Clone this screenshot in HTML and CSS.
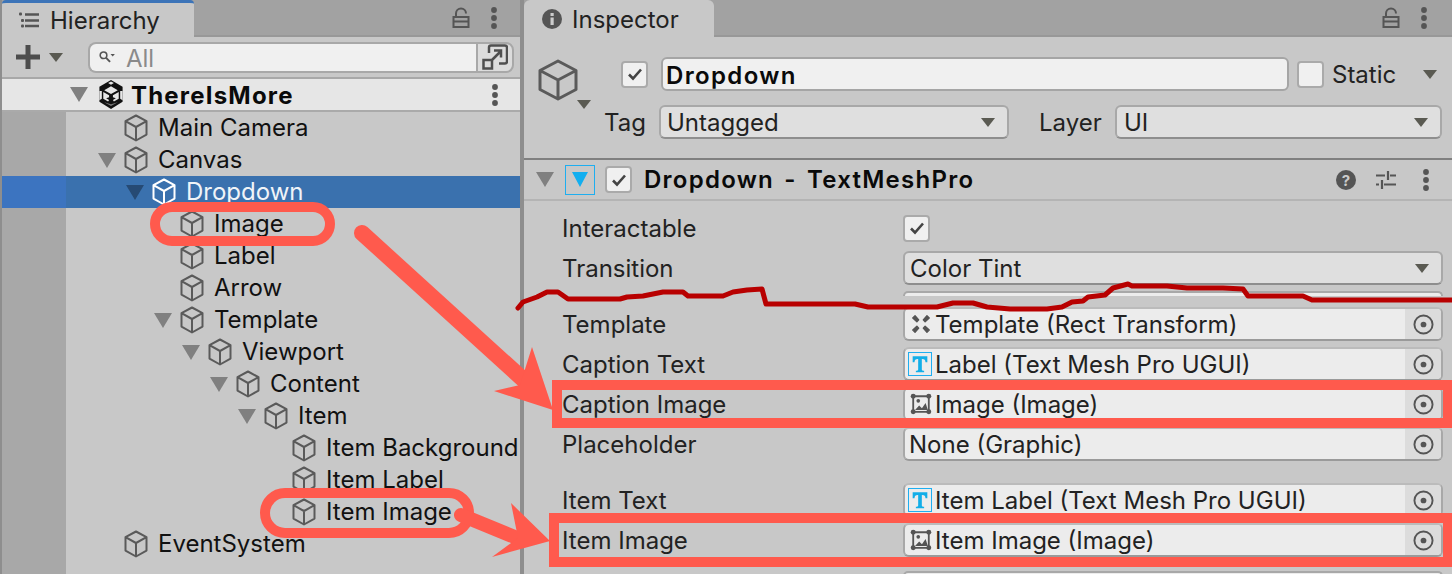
FILE: index.html
```html
<!DOCTYPE html>
<html lang="en">
<head>
<meta charset="utf-8">
<title>Unity Editor</title>
<link rel="stylesheet" href="styles.css">
</head>
<body>
<svg class="defs" aria-hidden="true">
  <symbol id="cube" viewBox="0 0 24 28">
    <path d="M12 1.500 22.500 7.200V20.600L12 26.500 1.500 20.600V7.200ZM1.500 7.200 12 13l10.500-5.800M12 13v13.500" fill="none" stroke="currentColor" stroke-width="2" stroke-linejoin="round"/>
  </symbol>
  <symbol id="kebab" viewBox="0 0 8 24">
    <circle cx="4" cy="4" r="2.900" fill="currentColor"/><circle cx="4" cy="12" r="2.900" fill="currentColor"/><circle cx="4" cy="20" r="2.900" fill="currentColor"/>
  </symbol>
  <symbol id="lock" viewBox="0 0 18 22">
    <path d="M4 10V6.500a5 5 0 0 1 10 0M1.500 10h15v10h-15ZM1.500 14.500h15" fill="none" stroke="currentColor" stroke-width="2"/>
  </symbol>
  <symbol id="target" viewBox="0 0 22 22">
    <circle cx="11" cy="11" r="9.500" fill="none" stroke="currentColor" stroke-width="2"/><circle cx="11" cy="11" r="3" fill="currentColor"/>
  </symbol>
  <symbol id="check" viewBox="0 0 16 14">
    <path d="M2 7.500 6 11.500 14 2.500" fill="none" stroke="currentColor" stroke-width="2.600"/>
  </symbol>
  <symbol id="img" viewBox="0 0 24 24">
    <path d="M3.500 3.500h17v17h-17Z" fill="none" stroke="currentColor" stroke-width="2"/>
    <path d="M5.500 18.500 10 13.500l3 3 4-5.500 2.500 7.500Z" fill="currentColor"/><circle cx="9" cy="8.500" r="2" fill="currentColor"/>
    <circle cx="3.500" cy="3.500" r="2.700" fill="currentColor"/><circle cx="20.500" cy="3.500" r="2.700" fill="currentColor"/><circle cx="3.500" cy="20.500" r="2.700" fill="currentColor"/><circle cx="20.500" cy="20.500" r="2.700" fill="currentColor"/>
  </symbol>
  <symbol id="tmp" viewBox="0 0 24 24">
    <path d="M4 3.500h16v6.500h-2c-.2-2.500-1-3.500-3.500-3.500H14V18c0 1 .8 1.300 2.500 1.300V21h-9v-1.700c1.700 0 2.500-.3 2.500-1.300V6.500h-.5C7 6.500 6.200 7.500 6 10H4Z" fill="#12aee8"/>
  </symbol>
</svg>

<div class="editor">
  <section class="panel hierarchy">
    <header class="tabbar">
      <div class="tab tab-active">
        <svg class="tab-icon" viewBox="0 0 22 18"><path d="M7 3.500h14M7 9.500h14M7 15h14" stroke="#555" stroke-width="2.400" fill="none"/><rect x="1" y="1.500" width="3" height="3" rx="1" fill="#555"/><rect x="3" y="8" width="3" height="3" rx="1" fill="#555"/><rect x="3" y="13.500" width="3" height="3" rx="1" fill="#555"/></svg>
        <span>Hierarchy</span>
      </div>
      <div class="tab-actions">
        <svg class="lock"><use href="#lock"/></svg>
        <svg class="kebab"><use href="#kebab"/></svg>
      </div>
    </header>
    <div class="toolbar">
      <svg class="plus" viewBox="0 0 24 24"><path d="M12 0v24M0 12h24" stroke="#4d4d4d" stroke-width="5"/></svg>
      <span class="tri tri-tool"></span>
      <div class="search">
        <svg class="search-icon" viewBox="0 0 20 16"><circle cx="6" cy="6" r="3.800" fill="none" stroke="#555" stroke-width="1.800"/><path d="m9 9 4.500 4.500" stroke="#555" stroke-width="2.200"/><path d="m14 4.500h5l-2.500 3Z" fill="#555"/></svg>
        <span class="search-text">All</span>
      </div>
      <button class="search-btn" type="button">
        <svg viewBox="0 0 26 26"><path d="M7 9V3.500A2 2 0 0 1 9 1.500h14a2 2 0 0 1 2 2v14a2 2 0 0 1-2 2h-6" fill="none" stroke="#4f4f4f" stroke-width="2.500"/><path d="M1.500 16h8.500v8.500H1.500ZM10 16l8.500-8.500M12 6.500h7V13.500" fill="none" stroke="#4f4f4f" stroke-width="2.500"/></svg>
      </button>
    </div>
    <div class="scene-row">
      <span class="tri-tree tri-scene"></span>
      <svg class="unity" viewBox="0 0 26 30"><path d="M13 0 25 7v15.500l-12 7.500L1 22.500V7Z" fill="#111"/><path d="M13 6.500 20 10.500 13 14.500 6 10.500Z" fill="#e6e6e6"/><path d="M1 11.500h2.500v8L1 21ZM25 11.500h-2.500v8L25 21ZM10 3 13 1.500 16 3 13 5Z" fill="#e6e6e6"/><path d="M5 12.500v7l5 2.800 1-1.500-3-2 3-1v-2ZM21 12.500v7l-5 2.800-1-1.500 3-2-3-1v-2Z" fill="#e6e6e6"/><path d="M6 23l7 4 7-4-7 2Z" fill="#777"/></svg>
      <strong>ThereIsMore</strong>
      <svg class="kebab kebab-scene"><use href="#kebab"/></svg>
    </div>
    <ul class="tree">
      <li class="row"><span class="gutter"></span><div class="node d0"><span class="tri-slot"></span><svg class="cube"><use href="#cube"/></svg><span class="name">Main Camera</span></div></li>
      <li class="row"><span class="gutter"></span><div class="node d0"><span class="tri-slot"><i class="tri-tree"></i></span><svg class="cube"><use href="#cube"/></svg><span class="name">Canvas</span></div></li>
      <li class="row selected"><span class="gutter"></span><div class="node d1"><span class="tri-slot"><i class="tri-tree"></i></span><svg class="cube"><use href="#cube"/></svg><span class="name">Dropdown</span></div></li>
      <li class="row"><span class="gutter"></span><div class="node d2"><span class="tri-slot"></span><svg class="cube"><use href="#cube"/></svg><span class="name">Image</span></div></li>
      <li class="row"><span class="gutter"></span><div class="node d2"><span class="tri-slot"></span><svg class="cube"><use href="#cube"/></svg><span class="name">Label</span></div></li>
      <li class="row"><span class="gutter"></span><div class="node d2"><span class="tri-slot"></span><svg class="cube"><use href="#cube"/></svg><span class="name">Arrow</span></div></li>
      <li class="row"><span class="gutter"></span><div class="node d2"><span class="tri-slot"><i class="tri-tree"></i></span><svg class="cube"><use href="#cube"/></svg><span class="name">Template</span></div></li>
      <li class="row"><span class="gutter"></span><div class="node d3"><span class="tri-slot"><i class="tri-tree"></i></span><svg class="cube"><use href="#cube"/></svg><span class="name">Viewport</span></div></li>
      <li class="row"><span class="gutter"></span><div class="node d4"><span class="tri-slot"><i class="tri-tree"></i></span><svg class="cube"><use href="#cube"/></svg><span class="name">Content</span></div></li>
      <li class="row"><span class="gutter"></span><div class="node d5"><span class="tri-slot"><i class="tri-tree"></i></span><svg class="cube"><use href="#cube"/></svg><span class="name">Item</span></div></li>
      <li class="row"><span class="gutter"></span><div class="node d6"><span class="tri-slot"></span><svg class="cube"><use href="#cube"/></svg><span class="name">Item Background</span></div></li>
      <li class="row"><span class="gutter"></span><div class="node d6"><span class="tri-slot"></span><svg class="cube"><use href="#cube"/></svg><span class="name">Item Label</span></div></li>
      <li class="row"><span class="gutter"></span><div class="node d6"><span class="tri-slot"></span><svg class="cube"><use href="#cube"/></svg><span class="name">Item Image</span></div></li>
      <li class="row"><span class="gutter"></span><div class="node d0"><span class="tri-slot"></span><svg class="cube"><use href="#cube"/></svg><span class="name">EventSystem</span></div></li>
      <li class="row row-fill"><span class="gutter"></span></li>
    </ul>
  </section>

  <section class="panel inspector">
    <header class="tabbar">
      <div class="tab tab-plain">
        <svg class="info" viewBox="0 0 20 20"><circle cx="10" cy="10" r="10" fill="#555"/><rect x="8.500" y="8.500" width="3.200" height="7.500" fill="#ccc"/><rect x="8.500" y="4" width="3.200" height="3" fill="#ccc"/></svg>
        <span>Inspector</span>
      </div>
      <div class="tab-actions">
        <svg class="lock"><use href="#lock"/></svg>
        <svg class="kebab"><use href="#kebab"/></svg>
      </div>
    </header>
    <div class="go-header">
      <div class="go-icon">
        <svg class="cube-lg" viewBox="0 0 40 42"><path d="M20 2 38 11.500V30.500L20 40 2 30.500V11.500ZM2 11.500 20 21l18-9.500M20 21v19" fill="none" stroke="currentColor" stroke-width="3" stroke-linejoin="round"/></svg>
        <span class="tri tri-go"></span>
      </div>
      <div class="go-rows">
        <div class="go-name">
          <span class="checkbox"><svg><use href="#check"/></svg></span>
          <div class="name-field">Dropdown</div>
          <span class="checkbox"></span>
          <span class="static-label">Static</span>
          <span class="tri tri-static"></span>
        </div>
        <div class="go-tags">
          <span class="tag-label">Tag</span>
          <div class="select select-tag"><span>Untagged</span><i class="tri"></i></div>
          <span class="layer-label">Layer</span>
          <div class="select select-layer"><span>UI</span><i class="tri"></i></div>
        </div>
      </div>
    </div>
    <div class="comp-header">
      <span class="tri-tree tri-comp"></span>
      <span class="comp-icon"><i></i></span>
      <span class="checkbox"><svg><use href="#check"/></svg></span>
      <strong>Dropdown - TextMeshPro</strong>
      <svg class="help" viewBox="0 0 20 20"><circle cx="10" cy="10" r="10" fill="#555"/><text x="10" y="15.500" text-anchor="middle" class="help-q">?</text></svg>
      <svg class="sliders" viewBox="0 0 20 20"><path d="M0 5.500h9M14 5.500h6M0 14.500h3M8 14.500h12M12 1v9M6 10v9" stroke="#555" stroke-width="2.200" fill="none"/></svg>
      <svg class="kebab"><use href="#kebab"/></svg>
    </div>
    <div class="props">
      <div class="prop"><label>Interactable</label><span class="checkbox"><svg><use href="#check"/></svg></span></div>
      <div class="prop"><label>Transition</label><div class="select select-prop"><span>Color Tint</span><i class="tri"></i></div></div>
      <div class="stub-row"><div class="stub"></div></div>
      <div class="prop"><label>Template</label><div class="field"><svg class="field-icon" viewBox="0 0 24 24"><path d="M3 5.500 5.500 3 9.500 7.500 7.500 9.500ZM21 5.500 18.500 3 14.500 7.500 16.500 9.500ZM3 18.500 5.500 21 9.500 16.500 7.500 14.500ZM21 18.500 18.500 21 14.500 16.500 16.500 14.500Z" fill="#555" stroke="#555" stroke-width="1.500" stroke-linejoin="round"/></svg><span class="field-text">Template (Rect Transform)</span><span class="pick"><svg><use href="#target"/></svg></span></div></div>
      <div class="prop"><label>Caption Text</label><div class="field"><span class="tmp-box"><svg><use href="#tmp"/></svg></span><span class="field-text">Label (Text Mesh Pro UGUI)</span><span class="pick"><svg><use href="#target"/></svg></span></div></div>
      <div class="prop"><label>Caption Image</label><div class="field"><svg class="field-icon"><use href="#img"/></svg><span class="field-text">Image (Image)</span><span class="pick"><svg><use href="#target"/></svg></span></div></div>
      <div class="prop"><label>Placeholder</label><div class="field"><span class="field-text text-none">None (Graphic)</span><span class="pick"><svg><use href="#target"/></svg></span></div></div>
      <div class="prop prop-gap"><label>Item Text</label><div class="field"><span class="tmp-box"><svg><use href="#tmp"/></svg></span><span class="field-text">Item Label (Text Mesh Pro UGUI)</span><span class="pick"><svg><use href="#target"/></svg></span></div></div>
      <div class="prop"><label>Item Image</label><div class="field"><svg class="field-icon"><use href="#img"/></svg><span class="field-text">Item Image (Image)</span><span class="pick"><svg><use href="#target"/></svg></span></div></div>
      <div class="stub-row stub-last"><div class="stub"></div></div>
    </div>
  </section>
</div>

<svg class="annotations" viewBox="0 0 1452 574" aria-hidden="true">
  <polyline class="redline" points="518,308 523,302 537,297 547,292 558,292 568,299 620,299 627,297 643,296 663,292 683,292 688,296 723,296 733,292 747,290 762,289 766,304 855,304 868,307 937,307 953,303 973,303 987,307 1010,309 1047,309 1062,307 1072,302 1083,301 1088,297 1105,295 1113,288 1128,284 1132,286 1167,286 1187,288 1223,288 1243,289 1248,296 1303,296 1312,300 1452,300"/>
  <rect class="mark" x="155" y="207" width="175" height="34" rx="17"/>
  <rect class="mark" x="265" y="493" width="204" height="40" rx="20"/>
  <path class="mark-frame" d="M552 380H1452V428H552ZM562 390V418H1443V390Z"/>
  <path class="mark-frame" d="M549 513H1452V567H549ZM559 523V557H1443V523Z"/>
  <line class="arrow-shaft" x1="362" y1="233" x2="526" y2="382"/>
  <polygon class="arrow-head" points="532,347 553,410 494,391 520,385"/>
  <line class="arrow-shaft-2" x1="461" y1="515" x2="522" y2="540"/>
  <polygon class="arrow-head" points="511,503 550,541 492,557 518,538"/>
</svg>
</body>
</html>
```

FILE: styles.css
```css
* { box-sizing: border-box; }
html, body { margin: 0; padding: 0; }
body {
  width: 1452px;
  height: 574px;
  overflow: hidden;
  position: relative;
  background: #8e8e8e;
  font-family: Inter, "Liberation Sans", sans-serif;
  font-size: 24px;
  color: #111;
}
.defs { position: absolute; width: 0; height: 0; }
.editor { display: flex; height: 574px; padding-left: 2px; gap: 4px; }
.panel { background: #c8c8c8; height: 574px; overflow: hidden; }
.hierarchy { width: 518px; flex: none; display: flex; flex-direction: column; }
.inspector { flex: 1; min-width: 0; }

/* tabs */
.tabbar { height: 37px; display: flex; background: #a2a2a2; border-bottom: 2px solid #989898; flex: none; }
.tab { height: 37px; width: 192px; flex: none; background: #c8c8c8; display: flex; align-items: center; border-radius: 4px 4px 0 0; color: #222; }
.tab-active { border-top: 3px solid #3c74b8; padding-left: 16px; gap: 10px; }
.tab-plain { width: 190px; padding: 2px 0 0 18px; gap: 10px; border-radius: 6px 6px 0 0; }
.tab-icon { width: 22px; height: 18px; }
.info { width: 20px; height: 20px; margin-top: -2px; }
.tab-actions { margin-left: auto; display: flex; align-items: center; gap: 20px; height: 35px; padding-right: 22px; }
.inspector .tab-actions { padding-right: 24px; }
.lock { width: 18px; height: 22px; color: #555; }
.kebab { width: 8px; height: 24px; color: #555; display: block; }

/* hierarchy toolbar */
.toolbar { height: 42px; display: flex; align-items: center; padding-left: 14px; border-bottom: 2px solid #a8a8a8; flex: none; }
.plus { width: 24px; height: 24px; flex: none; }
.tri { display: inline-block; width: 0; height: 0; border-left: 7px solid transparent; border-right: 7px solid transparent; border-top: 9px solid #5a5a52; flex: none; }
.tri-tool { margin-left: 9px; }
.search { margin-left: 25px; width: 388px; height: 31px; background: #f0f0f0; border: 2px solid #a8a8a8; border-right: 0; border-radius: 8px 0 0 8px; display: flex; align-items: center; padding-left: 8px; gap: 10px; color: #8a8a8a; flex: none; }
.search-icon { width: 18px; height: 14px; }
.search-text { padding-top: 2px; }
.search-btn { width: 38px; height: 31px; padding: 0; background: #dcdcdc; border: 2px solid #a8a8a8; border-radius: 0 8px 8px 0; display: flex; align-items: center; justify-content: center; flex: none; }
.search-btn svg { width: 26px; height: 26px; }

/* tree */
.scene-row { height: 33px; background: #e6e6e6; border-bottom: 2px solid #aaa; display: flex; align-items: center; padding-left: 68px; flex: none; }
.tri-tree { display: block; width: 0; height: 0; border-left: 9px solid transparent; border-right: 9px solid transparent; border-top: 15px solid #808080; }
.unity { width: 26px; height: 29px; margin-left: 10px; flex: none; }
.scene-row strong { font-weight: 700; margin-left: 7px; padding-top: 2px; color: #0a0a0a; letter-spacing: 1.2px; }
.kebab-scene { margin-left: auto; margin-right: 21px; }
.tree { list-style: none; margin: 0; padding: 0; flex: 1; display: flex; flex-direction: column; min-height: 0; }
.row { display: flex; height: 32px; flex: none; }
.row-fill { flex: 1; }
.gutter { width: 64px; flex: none; background: #a8a8a8; }
.node { display: flex; align-items: center; flex: 1; white-space: nowrap; min-width: 0; overflow: hidden; }
.name { padding-bottom: 2px; }
.d0 { padding-left: 29px; }
.d1 { padding-left: 57px; }
.d2 { padding-left: 85px; }
.d3 { padding-left: 113px; }
.d4 { padding-left: 141px; }
.d5 { padding-left: 169px; }
.d6 { padding-left: 197px; }
.tri-slot { width: 24px; flex: none; display: flex; justify-content: center; }
.cube { width: 24px; height: 28px; margin-left: 5px; margin-right: 10px; color: #5a5a5a; flex: none; }
.selected .gutter { background: #3c74c0; }
.selected .node { background: #3a71ae; color: #f0f4f8; }
.selected .cube { color: #fff; }
.selected .tri-tree { border-top-color: #264a74; }

/* inspector header */
.go-header { height: 123px; display: flex; border-bottom: 2px solid #808080; }
.go-icon { width: 76px; flex: none; position: relative; padding: 22px 0 0 14px; }
.cube-lg { width: 40px; height: 42px; color: #5a5a5a; display: block; }
.tri-go { position: absolute; left: 53px; top: 63px; }
.go-rows { flex: 1; min-width: 0; padding-top: 20px; }
.go-name { display: flex; align-items: center; height: 34px; padding-left: 21px; }
.checkbox { width: 27px; height: 27px; flex: none; background: #f0f0f0; border: 2px solid #aaa; border-radius: 4px; display: flex; align-items: center; justify-content: center; color: #444; }
.checkbox svg { width: 16px; height: 14px; }
.name-field { width: 628px; height: 34px; margin-left: 13px; background: #f0f0f0; border: 2px solid #a5a5a5; border-radius: 6px; padding-left: 3px; font-weight: 600; line-height: 33px; letter-spacing: 1.35px; color: #0a0a0a; flex: none; }
.name-field + .checkbox { margin-left: 8px; }
.static-label { margin-left: 8px; color: #222; }
.tri-static { margin-left: 27px; }
.go-tags { display: flex; align-items: center; height: 34px; margin-top: 14px; padding-left: 4px; }
.tag-label { width: 55px; flex: none; color: #222; }
.layer-label { width: 76px; margin-left: 30px; flex: none; color: #222; }
.select { height: 34px; background: #dfdfdf; border: 2px solid #a8a8a8; border-bottom-color: #8e8e8e; border-radius: 6px; display: flex; align-items: center; justify-content: space-between; padding: 0 12px 0 5px; color: #222; flex: none; }
.select-tag { width: 350px; padding-left: 6px; }
.select-layer { width: 327px; padding-left: 7px; }
.select-prop { width: 540px; }

/* component header */
.comp-header { height: 41px; display: flex; align-items: center; padding-left: 12px; border-bottom: 2px solid #b4b4b4; }
.tri-comp { margin-right: 11px; }
.comp-icon { width: 30px; height: 30px; border: 1px solid #1eaef0; display: flex; align-items: center; justify-content: center; flex: none; margin-right: 10px; }
.comp-icon i { display: block; width: 0; height: 0; border-left: 8px solid transparent; border-right: 8px solid transparent; border-top: 15px solid #12aeef; }
.comp-header strong { margin-left: 12px; font-weight: 600; color: #0a0a0a; white-space: nowrap; letter-spacing: 1.25px; word-spacing: 3px; }
.help { width: 20px; height: 20px; margin-left: auto; }
.help-q { font: 700 15px Inter, "Liberation Sans", sans-serif; fill: #ccc; }
.sliders { width: 20px; height: 20px; margin-left: 20px; }
.comp-header .kebab { margin-left: 26px; margin-right: 22px; }

/* properties */
.props { display: flex; flex-direction: column; padding-top: 7px; }
.prop { display: flex; align-items: center; height: 40px; padding-left: 38px; flex: none; }
.prop label { width: 341px; flex: none; color: #222; }
.prop-gap { margin-top: 16px; }
.stub-row { height: 16px; padding: 3px 0 0 379px; flex: none; }
.stub { width: 540px; height: 5px; background: #ececec; border: 2px solid #a8a8a8; border-bottom: 0; border-radius: 6px 6px 0 0; }
.stub-last { padding-top: 11px; height: 30px; }
.field { width: 540px; height: 34px; background: #ececec; border: 2px solid #a8a8a8; border-top-color: #bbb; border-bottom-color: #9a9a9a; border-radius: 6px; display: flex; align-items: center; padding-left: 5px; flex: none; overflow: hidden; color: #222; }
.field-icon { width: 22px; height: 22px; flex: none; color: #555; }
.tmp-box { width: 24px; height: 24px; margin-left: -2px; border: 1px solid #1eaef0; flex: none; display: block; }
.tmp-box svg { width: 22px; height: 22px; display: block; }
.field-text { margin-left: 3px; white-space: nowrap; }
.text-none { margin-left: -1px; }
.pick { margin-left: auto; width: 36px; height: 100%; flex: none; background: #dcdcdc; display: flex; align-items: center; justify-content: center; color: #555; }
.pick svg { width: 21px; height: 21px; }

/* annotations */
.annotations { position: absolute; left: 0; top: 0; width: 1452px; height: 574px; pointer-events: none; }
.redline { fill: none; stroke: #b80000; stroke-width: 5; stroke-linejoin: round; stroke-linecap: round; }
.mark { fill: none; stroke: #ff5a4d; stroke-width: 10; }
.mark-frame { fill: #ff5a4d; fill-rule: evenodd; }
.arrow-head { fill: #ff5a4d; }
.arrow-shaft { stroke: #ff5a4d; stroke-width: 16; stroke-linecap: round; }
.arrow-shaft-2 { stroke: #ff5a4d; stroke-width: 14; stroke-linecap: round; }
```
